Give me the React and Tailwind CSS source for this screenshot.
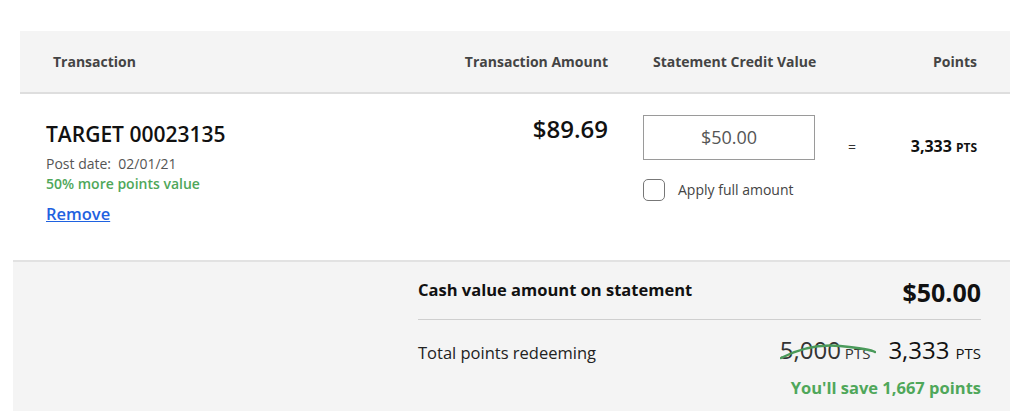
export default function App() {
  const green = "text-[#4fa75a]";
  return (
    <div className="w-[1024px] h-[411px] overflow-hidden bg-white font-['Open_Sans',sans-serif] pt-[31px]">
      <div className="ml-[20px] mr-[14px]">
        <div className="grid grid-cols-[1fr_223px_172px_162px] h-[63px] items-center bg-[#f4f4f4] border-b-2 border-[#dedede] pl-[33px] pr-[33px] text-[14px] font-bold text-[#444] whitespace-nowrap">
          <div>Transaction</div>
          <div className="text-right pr-[35px]">Transaction Amount</div>
          <div className="pl-[10px]">Statement Credit Value</div>
          <div className="text-right">Points</div>
        </div>
        <div className="grid grid-cols-[1fr_223px_172px_162px] items-start h-[166px] pl-[26px] pr-[33px] pt-[21px]">
          <div className="mt-[5px] flex flex-col items-start">
            <div className="text-[21px] leading-[28px] font-semibold text-[#111]">TARGET 00023135</div>
            <div className="mt-[6px] text-[14px] leading-[20px] text-[#555] whitespace-pre">Post date:  02/01/21</div>
            <div className={`text-[14px] leading-[20px] font-semibold ${green}`}>50% more points value</div>
            <a href="#" className="mt-[9px] text-[16.5px] leading-[22px] font-semibold underline text-[#1f62e0]">Remove</a>
          </div>
          <div className="text-right pr-[35px] text-[24px] leading-[28px] font-semibold text-[#111]">$89.69</div>
          <div>
            <div className="h-[45px] border border-[#9a9a9a] flex items-center justify-center text-[18px] text-[#555]">$50.00</div>
            <div className="mt-[19px] flex items-center gap-[13px]">
              <div className="w-[22px] h-[22px] rounded-[5px] border border-[#777] bg-white"></div>
              <span className="text-[14px] leading-[22px] text-[#444]">Apply full amount</span>
            </div>
          </div>
          <div className="mt-[19px] pl-[33px] flex items-baseline justify-between">
            <span className="text-[14px] text-[#333]">=</span>
            <span className="text-[#111] font-bold">
              <span className="text-[16px] leading-[22px]">3,333</span>
              <span className="text-[12px] ml-[4px]">PTS</span>
            </span>
          </div>
        </div>
      </div>
      <div className="ml-[13px] mr-[14px] h-[151px] bg-[#f4f4f4] border-t-2 border-[#e2e2e2] pl-[405px] pr-[29px]">
        <div className="flex justify-between items-start pt-[14px] pb-[11px] border-b border-[#cfcfcf]">
          <div className="mt-[3px] text-[16.5px] leading-[22px] font-bold text-[#111]">Cash value amount on statement</div>
          <div className="text-[25px] leading-[32px] font-bold text-[#111]">$50.00</div>
        </div>
        <div className="flex justify-between items-baseline pt-[14px]">
          <div className="text-[16.5px] leading-[22px] text-[#222]">Total points redeeming</div>
          <div className="flex items-baseline">
            <span className="relative text-[#333]">
              <span className="text-[24px] leading-[32px]">5,000</span>
              <span className="text-[15px] ml-[4px]">PTS</span>
              <svg className="absolute left-0 top-0 w-[96px] h-[32px]" viewBox="0 0 96 32" fill="none">
                <path d="M1 24 Q 30 9 60 12 T 95 18" stroke="#4a9a5a" strokeWidth="2.5" strokeLinecap="round" />
              </svg>
            </span>
            <span className="ml-[18px] text-[24px] leading-[32px] text-[#111]">3,333</span>
            <span className="ml-[6px] text-[15px] text-[#111]">PTS</span>
          </div>
        </div>
        <div className={`mt-[11px] text-right text-[16.5px] leading-[22px] font-bold ${green}`}>You'll save 1,667 points</div>
      </div>
    </div>
  );
}
